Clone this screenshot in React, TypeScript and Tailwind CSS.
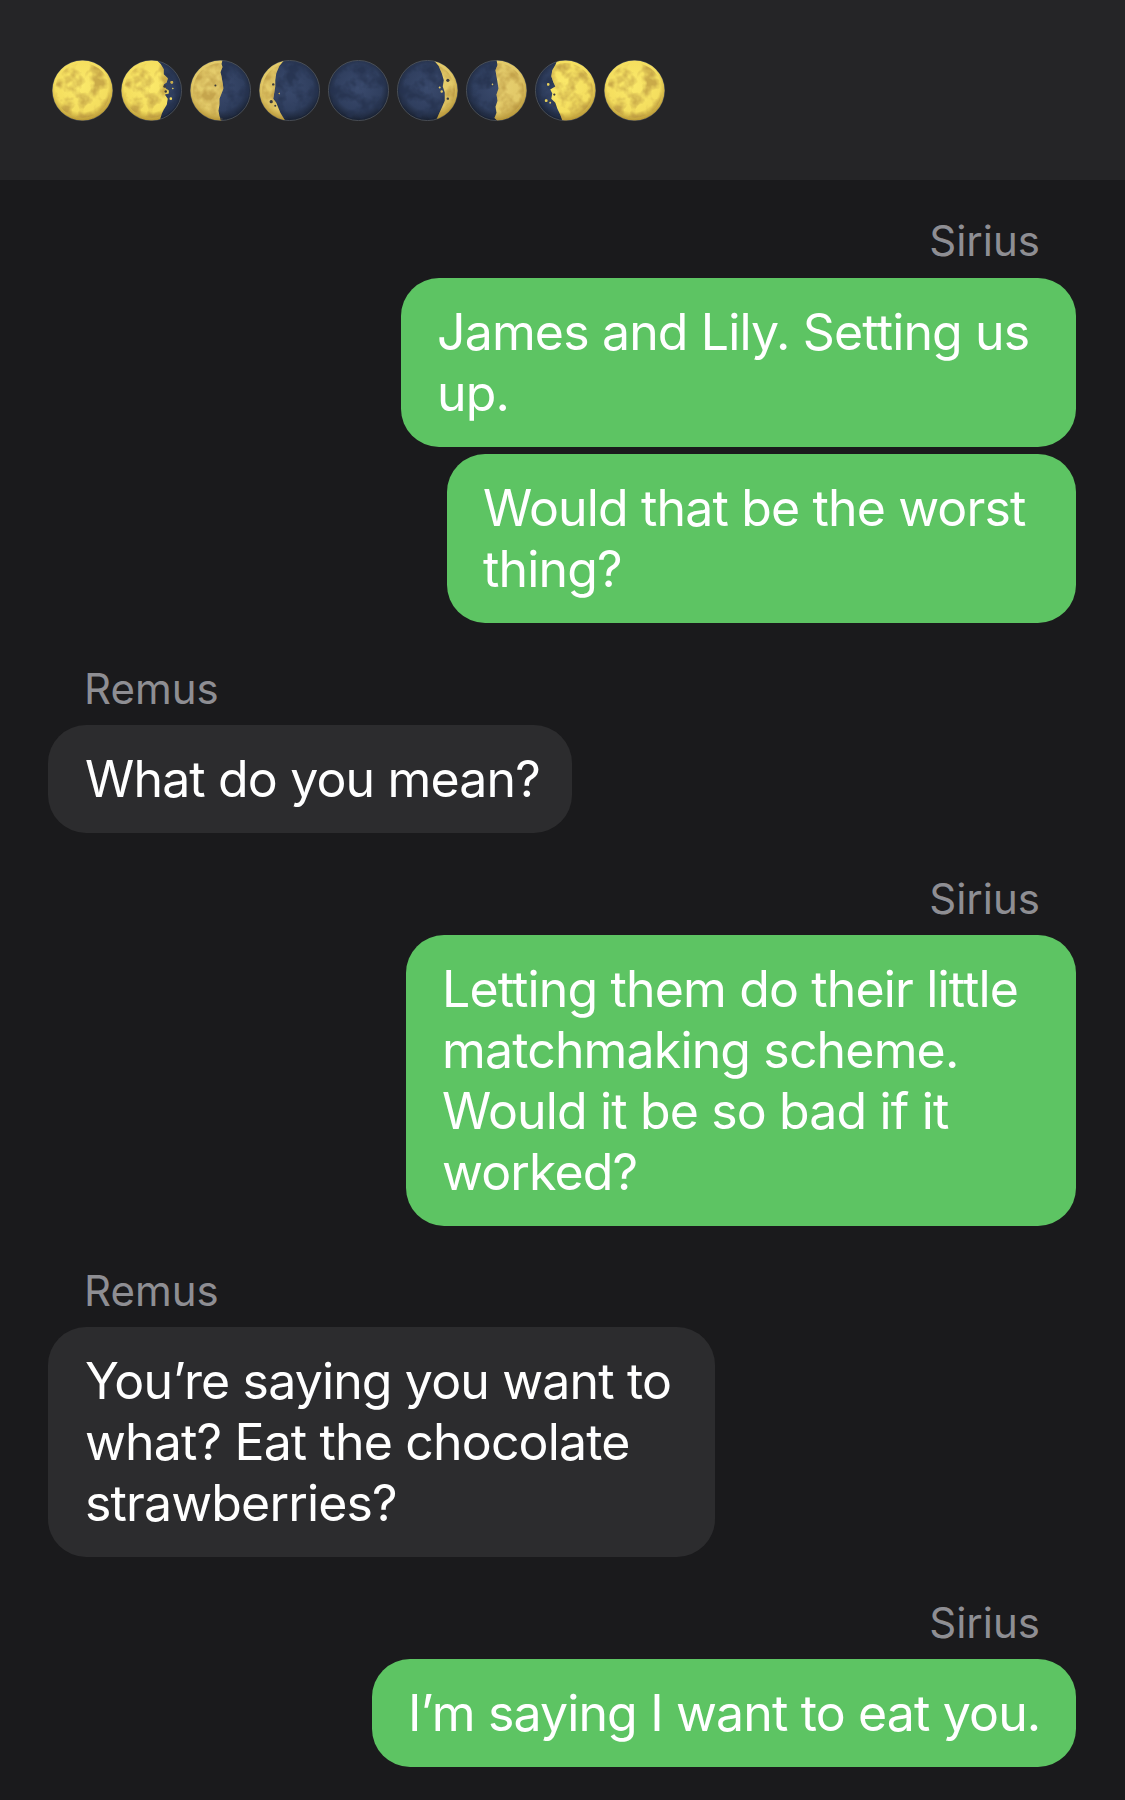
type Spot = [number, number, number]
type Phase = { id: string, lit: string, dull?: boolean, seed: number, islands?: Spot[], pits?: Spot[] }

// lit side of each moon as a polygon on a 60x60 box, clipped to the disc later
const phases: Phase[] = [
  { id: 'm0', seed: 4, lit: '0,0 60,0 60,60 0,60' },
  { id: 'm1', seed: 4, lit: '0,0 35,0 39,4 42,9 42,14 46,18 45,22 42,24 44,28 47,30 47,33 43,34 46,38 45,44 42,49 40,53 38,60 0,60', islands: [[50, 22, 1.4], [49, 38, 1.3], [51, 28, 0.8]], pits: [[43, 26, 1.4], [44, 31, 1.2]] },
  { id: 'm2', seed: 9, dull: true, lit: '0,0 32,0 31,4 32,7 30,12 31,16 32,22 33,28 31,33 29,38 29,44 28,50 29,55 31,60 0,60', pits: [[25, 25, 1], [31, 58, 1.2]] },
  { id: 'm3', seed: 9, dull: true, lit: '0,0 25,0 20,6 17,13 16,20 16,26 15,32 14,38 17,42 19,47 21,52 26,60 0,60', pits: [[14, 24, 1.2], [12, 41, 1.6], [16, 45, 1]], islands: [[20, 33, 0.7]] },
  { id: 'm4', seed: 12, lit: '0,0 0,0 0,0' },
  { id: 'm5', seed: 12, dull: true, lit: '60,0 36,0 41,6 44,13 46,20 45,26 47,32 47,40 44,47 39,58 37,60 60,60', pits: [[50, 20, 1.6], [50, 38, 1.2]], islands: [[42, 27, 1], [44, 31, 1.2]] },
  { id: 'm6', seed: 7, dull: true, lit: '60,0 30,0 31,5 29,10 30,16 31,22 32,28 30,34 31,40 29,46 30,52 28,57 31,60 60,60', islands: [[26, 24, 0.8]] },
  { id: 'm7', seed: 7, lit: '60,0 22,0 20,5 17,10 16,16 18,22 20,26 15,29 17,33 16,38 20,42 22,48 25,54 27,60 60,60', islands: [[13, 24, 1.3], [11, 40, 1.4], [15, 42, 0.9]], pits: [[19, 34, 1.1], [19, 45, 1]] },
  { id: 'm8', seed: 4, lit: '0,0 60,0 60,60 0,60' },
]

function Moon({ phase }: { phase: Phase }){
  const id = phase.id
  const mid = phase.dull ? '#e2c968' : '#f4de5f'
  const core = phase.dull ? '#e8d172' : '#fbe96a'
  return (
    <svg viewBox="0 0 60 60" className="w-[61px] h-[61px] shrink-0">
      <defs>
        <radialGradient id={id + 'd'} cx="50%" cy="45%" r="55%">
          <stop offset="0%" stopColor="#3a4a6d" />
          <stop offset="70%" stopColor="#303f5f" />
          <stop offset="100%" stopColor="#182030" />
        </radialGradient>
        <radialGradient id={id + 'l'} gradientUnits="userSpaceOnUse" cx="29" cy="25" r="36">
          <stop offset="0%" stopColor={core} />
          <stop offset="72%" stopColor={mid} />
          <stop offset="100%" stopColor="#ad8a2e" />
        </radialGradient>
        <filter id={id + 'n'} x="0" y="0" width="100%" height="100%" colorInterpolationFilters="sRGB">
          <feTurbulence type="fractalNoise" baseFrequency="0.075" numOctaves="3" seed={phase.seed} />
          <feColorMatrix type="matrix" values="0 0 0 0 0.72  0 0 0 0 0.58  0 0 0 0 0.25  3 0 0 0 -1.2" />
          <feComposite in2="SourceAlpha" operator="in" />
        </filter>
        <filter id={id + 'k'} x="0" y="0" width="100%" height="100%" colorInterpolationFilters="sRGB">
          <feTurbulence type="fractalNoise" baseFrequency="0.075" numOctaves="3" seed={phase.seed + 3} />
          <feColorMatrix type="matrix" values="0 0 0 0 0.15  0 0 0 0 0.2  0 0 0 0 0.31  3 0 0 0 -1.2" />
          <feComposite in2="SourceAlpha" operator="in" />
        </filter>
        <filter id={id + 's'} x="-5%" y="-5%" width="110%" height="110%">
          <feGaussianBlur stdDeviation="0.4" />
        </filter>
        <clipPath id={id + 'c'}>
          <circle cx="30" cy="30" r="29.6" />
        </clipPath>
        <clipPath id={id + 't'}>
          <polygon points={phase.lit} />
          {(phase.islands || []).map((s, i) => <circle key={i} cx={s[0]} cy={s[1]} r={s[2]} />)}
        </clipPath>
      </defs>
      <circle cx="30" cy="30" r="29.6" fill={`url(#${id}d)`} stroke="#565b63" strokeWidth="0.7" />
      <g clipPath={`url(#${id}c)`}>
        <circle cx="30" cy="30" r="28" fill="#000" filter={`url(#${id}k)`} opacity="0.8" />
        <g filter={`url(#${id}s)`}>
          <g clipPath={`url(#${id}t)`}>
            <circle cx="30" cy="30" r="30" fill={`url(#${id}l)`} />
            <circle cx="30" cy="30" r="27" fill="#000" filter={`url(#${id}n)`} opacity="0.7" />
          </g>
          {(phase.pits || []).map((s, i) => <circle key={i} cx={s[0]} cy={s[1]} r={s[2]} fill="#3a3a3c" />)}
        </g>
      </g>
    </svg>
  )
}

function Name({ children, right }: { children: string, right?: boolean }){
  return (
    <div className={right ? 'text-[42px] leading-[48px] text-[#8e8e93] text-right pr-[36px]' : 'text-[42px] leading-[48px] text-[#8e8e93] pl-[36px]'}>
      {children}
    </div>
  )
}

function Bubble({ lines, sent, width }: { lines: string[], sent?: boolean, width: string }){
  const tone = sent ? 'self-end bg-[#5dc463] px-[36px]' : 'self-start bg-[#2c2c2e] px-[37px]'
  return (
    <div className={`${tone} ${width} rounded-[38px] py-[23.5px] text-white text-[50px] leading-[61px] tracking-[-0.85px] whitespace-nowrap`}>
      {lines.map((l, i) => <div key={i}>{l}</div>)}
    </div>
  )
}

export default function App(){
  return (
    <div className="font-['Inter',sans-serif] w-[1125px] h-[1800px] bg-[#1a1a1c] overflow-hidden flex flex-col">
      <div className="h-[180px] bg-[#252527] flex items-center gap-[8px] pl-[52px]">
        {phases.map(p => <Moon key={p.id} phase={p} />)}
      </div>
      <div className="flex flex-col pl-[48px] pr-[49px] pt-[37px]">
        <Name right>Sirius</Name>
        <div className="h-[13px]" />
        <Bubble sent width="w-[675px]" lines={['James and Lily. Setting us', 'up.']} />
        <div className="h-[7px]" />
        <Bubble sent width="w-[629px]" lines={['Would that be the worst', 'thing?']} />
        <div className="h-[42px]" />
        <Name>Remus</Name>
        <div className="h-[12px]" />
        <Bubble width="w-[524px]" lines={['What do you mean?']} />
        <div className="h-[42px]" />
        <Name right>Sirius</Name>
        <div className="h-[12px]" />
        <Bubble sent width="w-[670px]" lines={['Letting them do their little', 'matchmaking scheme.', 'Would it be so bad if it', 'worked?']} />
        <div className="h-[41px]" />
        <Name>Remus</Name>
        <div className="h-[12px]" />
        <Bubble width="w-[667px]" lines={['You’re saying you want to', 'what? Eat the chocolate', 'strawberries?']} />
        <div className="h-[42px]" />
        <Name right>Sirius</Name>
        <div className="h-[12px]" />
        <Bubble sent width="w-[704px]" lines={['I’m saying I want to eat you.']} />
      </div>
    </div>
  )
}
